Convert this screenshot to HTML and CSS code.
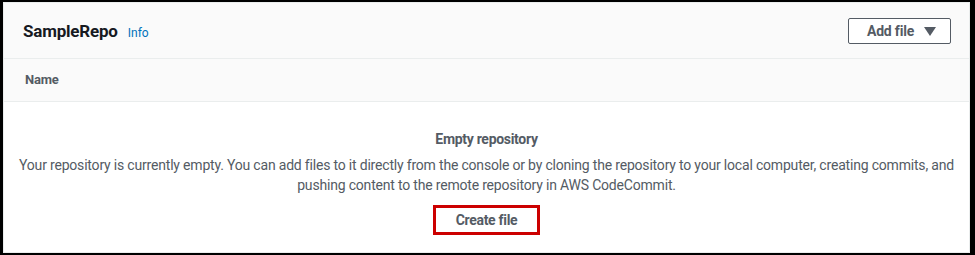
FILE: index.html
```html
<!DOCTYPE html>
<html lang="en">
<head>
<meta charset="UTF-8">
<title>SampleRepo</title>
<link rel="stylesheet" href="styles.css">
</head>
<body>

<div class="card">

  <div class="header">
    <div class="heading">
      <span class="title">SampleRepo</span>
      <a class="info" href="#">Info</a>
    </div>
    <button class="add-btn">Add file
      <svg class="caret" width="12" height="9" viewBox="0 0 12 9"><path d="M0 0h12L6 9z" fill="#545b64"/></svg>
    </button>
  </div>

  <div class="cols">Name</div>

  <div class="empty">
    <div class="empty-title">Empty repository</div>
    <p class="empty-text">Your repository is currently empty. You can add files to it directly from the console or by cloning the repository to your local computer, creating commits, and pushing content to the remote repository in AWS CodeCommit.</p>
    <button class="create-btn">Create file</button>
  </div>

</div>

</body>
</html>
```

FILE: styles.css
```css
body{
  margin:0;
  background:#000;
  font-family:Roboto,'Noto Sans',sans-serif;
  color:#545b64;
}

.card{
  margin:2px 5px 2px 3px;
  height:249px;
  background:#fff;
  border:1px solid #eaeded;
  overflow:hidden;
}

.header{
  height:55px;
  padding:0 18px 0 19px;
  display:flex;
  align-items:center;
  justify-content:space-between;
  background:#fafafa;
  border-bottom:1px solid #eaeded;
}

.heading{
  display:flex;
  align-items:baseline;
  gap:10px;
}

.title{
  font-size:17px;
  font-weight:bold;
  color:#16191f;
  letter-spacing:-0.2px;
}

.info{
  font-size:12px;
  color:#0073bb;
  text-decoration:none;
}

.add-btn{
  width:103px;
  height:26px;
  margin-top:1px;
  display:flex;
  align-items:center;
  justify-content:center;
  gap:10px;
  padding:0 0 0 4px;
  background:#fff;
  border:1px solid #545b64;
  border-radius:2px;
  font-family:inherit;
  font-size:14px;
  font-weight:bold;
  color:#545b64;
  letter-spacing:-0.2px;
}

.caret{
  display:block;
}

.cols{
  height:42px;
  line-height:42px;
  padding-left:21px;
  background:#fafafa;
  border-bottom:1px solid #eaeded;
  font-size:13px;
  font-weight:bold;
  letter-spacing:-0.2px;
}

.empty{
  padding-top:29px;
  text-align:center;
}

.empty-title{
  font-size:14px;
  line-height:16px;
  font-weight:bold;
  letter-spacing:-0.3px;
}

.empty-text{
  margin:8px auto 10px;
  width:945px;
  font-size:14px;
  line-height:20px;
  letter-spacing:-0.19px;
}

.create-btn{
  width:107px;
  height:30px;
  background:#fff;
  border:3px solid #c00;
  font-family:inherit;
  font-size:14px;
  font-weight:bold;
  color:#545b64;
  letter-spacing:-0.3px;
}
```
